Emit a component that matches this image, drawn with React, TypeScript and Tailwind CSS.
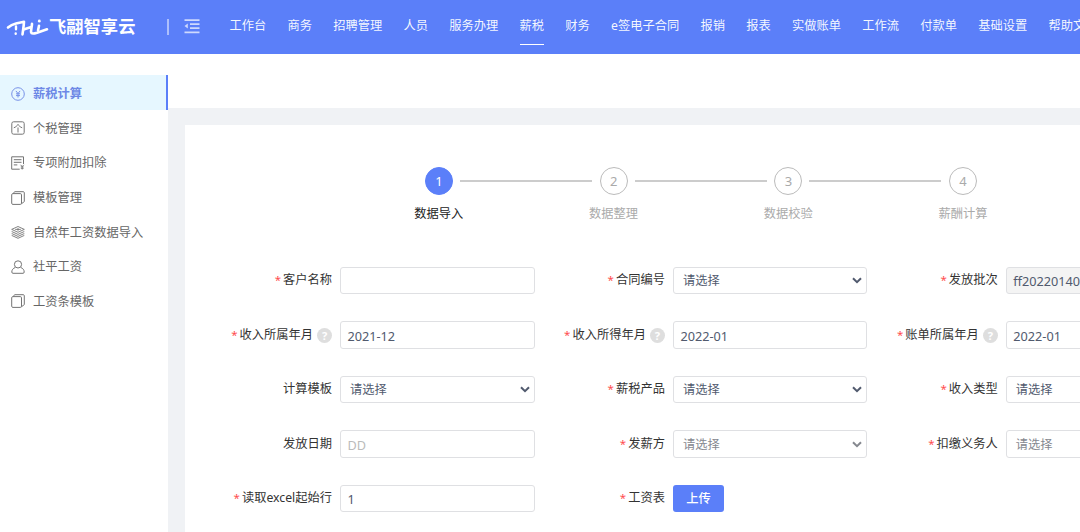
import React from 'react'

const navItems = [
  '工作台', '商务', '招聘管理', '人员', '服务办理', '薪税', '财务', 'e签电子合同',
  '报销', '报表', '实做账单', '工作流', '付款单', '基础设置', '帮助文档',
]

type IconName = 'yen' | 'tax' | 'deduct' | 'copy' | 'layers' | 'user'

const menu: { label: string; icon: IconName }[] = [
  { label: '薪税计算', icon: 'yen' },
  { label: '个税管理', icon: 'tax' },
  { label: '专项附加扣除', icon: 'deduct' },
  { label: '模板管理', icon: 'copy' },
  { label: '自然年工资数据导入', icon: 'layers' },
  { label: '社平工资', icon: 'user' },
  { label: '工资条模板', icon: 'copy' },
]

const steps = ['数据导入', '数据整理', '数据校验', '薪酬计算']

interface FieldProps {
  label: string
  required?: boolean
  help?: boolean
  kind?: 'input' | 'select' | 'upload'
  value?: string
  placeholder?: string
  disabled?: boolean
}

const fields: FieldProps[] = [
  { label: '客户名称', required: true },
  { label: '合同编号', required: true, kind: 'select', value: '请选择' },
  { label: '发放批次', required: true, value: 'ff20220140', disabled: true },
  { label: '收入所属年月', required: true, help: true, value: '2021-12' },
  { label: '收入所得年月', required: true, help: true, value: '2022-01' },
  { label: '账单所属年月', required: true, help: true, value: '2022-01' },
  { label: '计算模板', kind: 'select', value: '请选择' },
  { label: '薪税产品', required: true, kind: 'select', value: '请选择' },
  { label: '收入类型', required: true, kind: 'select', value: '请选择' },
  { label: '发放日期', placeholder: 'DD' },
  { label: '发薪方', required: true, kind: 'select', value: '请选择', disabled: true },
  { label: '扣缴义务人', required: true, kind: 'select', value: '请选择', disabled: true },
  { label: '读取excel起始行', required: true, value: '1' },
  { label: '工资表', required: true, kind: 'upload', value: '上传' },
]

function MenuIcon({ name }: { name: IconName }) {
  return (
    <svg width="14" height="14" viewBox="0 0 14 14" fill="none" stroke="currentColor" strokeWidth="1" className="mt-[3px] shrink-0 opacity-90">
      {name === 'yen' && (
        <>
          <circle cx="7" cy="7" r="6.3" />
          <path d="M4.9 3.9 7 6.5l2.1-2.6M7 6.5v4M5 6.8h4M5 8.6h4" />
        </>
      )}
      {name === 'tax' && (
        <>
          <rect x="0.8" y="0.8" width="12.4" height="12.4" rx="1.8" />
          <path d="M2.8 6.8C4.8 6 6.2 4.8 7 3.4c.8 1.4 2.2 2.600 4.200 3.400M7 6.500v5" />
        </>
      )}
      {name === 'deduct' && (
        <>
          <path d="M12.5 8V.8H.7v12.4h8M2.8 3.7h7.7M2.8 6.3h7.7M2.8 8.9h3.5" />
          <path d="m9.6 8.800 1.600 1.800 1.600-1.800M11.200 10.500v3M9.800 10.900h2.800M9.800 12.300h2.800" strokeWidth="0.9" />
        </>
      )}
      {name === 'copy' && (
        <>
          <rect x="0.7" y="2.6" width="9.8" height="10.8" rx="1.2" />
          <path d="M2.5 2.500 3 1.400c.2-.5.5-.7 1-.7h8.300c.6 0 1 .4 1 1v8.500c0 .4-.2.7-.5.9l-2.200 1.500" />
        </>
      )}
      {name === 'layers' && (
        <g strokeWidth="0.9">
          <path d="m7 1.500 6.300 2.900L7 7.300.7 4.400zM4.200 4.400h5.600M7 3v2.800" />
          <path d="M.7 6.500 7 9.400l6.300-2.900M.7 8.500 7 11.400l6.300-2.900M.7 10.400 7 13.300l6.300-2.900" />
        </g>
      )}
      {name === 'user' && (
        <>
          <circle cx="7" cy="4.400" r="3.600" />
          <path d="M4.200 7.500C2.100 8.300.8 9.900.8 12c0 .8.4 1.300 1.200 1.300h10c.8 0 1.200-.5 1.200-1.300 0-2.100-1.300-3.700-3.400-4.500" />
        </>
      )}
    </svg>
  )
}

function Header() {
  return (
    <header className="flex h-[53.5px] items-start overflow-hidden bg-[#5b7ff9] text-white">
      <div className="flex h-[53px] w-[167px] shrink-0 items-center pl-[6px]">
        <svg width="43" height="20" viewBox="0 0 43 20" fill="none" stroke="currentColor" strokeWidth="2.6" strokeLinecap="round" strokeLinejoin="round" className="mt-[2px]">
          <path d="M2 9.5C4.5 7.3 7 6.2 10 5.500L18 3.800c-.2 4.500-1 8.500-1.500 12.600" />
          <path d="M10 8.500v2.800M9.700 15.400v.3" strokeWidth="2.4" />
          <path d="M17.500 11.500 25.300 9M26 5.800c-.2 3.200-1.200 6.500-.9 8.500.3 2 3.200 1.200 6 .4l9.900-3.400" />
          <path d="M33 7.800 32 12.500" />
          <path d="M33.300 3v.2" strokeWidth="2.8" />
        </svg>
        <span className="text-[17.3px] leading-none font-bold whitespace-nowrap">飞翮智享云</span>
      </div>
      <div className="mt-[19px] h-[15.5px] w-[2px] shrink-0 bg-white/50" />
      <svg width="16" height="15" viewBox="0 0 16 15" className="mt-[19px] ml-[15px] shrink-0 text-white/70" fill="none" stroke="currentColor" strokeWidth="1.8">
        <path d="M.5 1.200h15M6 5.200h9.500M6 9.200h9.500M.5 13.300h15" />
        <path d="M3.800 4.500v5L.5 7z" fill="currentColor" stroke="none" />
      </svg>
      <nav className="ml-[29.5px] flex gap-[21.25px] text-white/95">
        {navItems.map((item) => (
          <span
            key={item}
            className={`h-[45px] shrink-0 border-b pt-[15.5px] leading-[20px] whitespace-nowrap ${item === '薪税' ? 'border-white' : 'border-transparent'}`}
          >
            {item}
          </span>
        ))}
      </nav>
    </header>
  )
}

function Sidebar() {
  return (
    <aside className="w-[167.5px] shrink-0 bg-white pt-[21.5px]">
      {menu.map((item, i) => (
        <div
          key={item.label}
          className={`flex h-[34.6px] items-center gap-[8px] border-r-[2px] pl-[11px] whitespace-nowrap ${
            i === 0 ? 'border-[#5b7ff9] bg-[#e6f7ff] text-[#6d88e6]' : 'border-transparent text-[#666]'
          }`}
        >
          <MenuIcon name={item.icon} />
          <span className={`leading-[20px] ${i === 0 ? 'pt-[3px] font-bold' : 'pt-[4px]'}`}>{item.label}</span>
        </div>
      ))}
    </aside>
  )
}

function Steps() {
  return (
    <div className="flex pl-[167px]">
      {steps.map((title, i) => (
        <div key={title} className="flex w-[174.7px] shrink-0 flex-col">
          <div className="flex items-center pl-[73.5px]">
            <div
              className={`flex size-[28px] shrink-0 items-center justify-center rounded-full border pt-[1px] text-[13px] ${
                i === 0 ? 'border-[#5b7ff9] bg-[#5b7ff9] text-white' : 'border-[#bbb] text-[#aaa]'
              }`}
            >
              {i + 1}
            </div>
            {i < 3 && <div className="ml-[7px] h-[2px] w-[132px] shrink-0 bg-[#ccc]" />}
          </div>
          <div className={`mt-[9px] text-center leading-[20px] ${i === 0 ? 'text-[#222]' : 'text-[#aaa]'}`}>
            {title}
          </div>
        </div>
      ))}
    </div>
  )
}

function Field({ label, required, help, kind = 'input', value, placeholder, disabled }: FieldProps) {
  return (
    <div className="flex h-[54.5px] items-start">
      <div className="flex w-[138.5px] shrink-0 items-center justify-end pt-[3.5px] pr-[8px] leading-[20px] whitespace-nowrap text-[#333]">
        {required && <span className="mr-[2px] h-[20px] text-[11.5px] text-[#ff4d4f]">*</span>}
        {label}
        {help && (
          <span className="mt-[2px] ml-[4px] flex size-[15px] items-center justify-center rounded-full bg-[#dedede] text-[11px] font-bold text-white">
            ?
          </span>
        )}
      </div>
      {kind === 'upload' ? (
        <button className="h-[27.5px] w-[51px] rounded-[3px] bg-[#5b7ff9] pt-[1px] font-medium text-white">{value}</button>
      ) : (
        <div
          className={`flex h-[27.5px] w-[194.5px] shrink-0 items-center justify-between rounded-[3px] border border-[#dfe0e3] whitespace-nowrap ${
            kind === 'select' ? 'pr-[4px] pl-[9px]' : 'px-[6.5px] text-[12.7px]'
          } ${disabled && kind === 'input' ? 'bg-[#f4f4f4]' : 'bg-white'} ${
            disabled && kind === 'select' ? 'text-[#85888f]' : 'text-[#515a6e]'
          }`}
        >
          <span className={placeholder ? 'pt-[2px] text-[#bbb]' : 'pt-[2px]'}>{placeholder ?? value}</span>
          {kind === 'select' && (
            <svg width="10" height="7" viewBox="0 0 10 7" fill="none" stroke="currentColor" strokeWidth="2">
              <path d="m1 1.200 4 4 4-4" />
            </svg>
          )}
        </div>
      )}
    </div>
  )
}

export default function App() {
  return (
    <div className="flex h-[532px] w-[1080px] flex-col overflow-hidden bg-[#f0f2f5] font-['Noto_Sans','Noto_Sans_CJK_SC',sans-serif] text-[12.25px]">
      <Header />
      <div className="flex min-h-0 flex-1">
        <Sidebar />
        <main className="min-w-0 flex-1 overflow-hidden">
          <div className="h-[54.5px] bg-white" />
          <div className="mt-[17px] ml-[17px] h-[420px] bg-white pt-[42px]">
            <Steps />
            <div className="mt-[42.8px] grid grid-cols-[332.9px_332.9px_332.9px] pl-[17px]">
              {fields.map((field) => (
                <Field key={field.label} {...field} />
              ))}
            </div>
          </div>
        </main>
      </div>
    </div>
  )
}
